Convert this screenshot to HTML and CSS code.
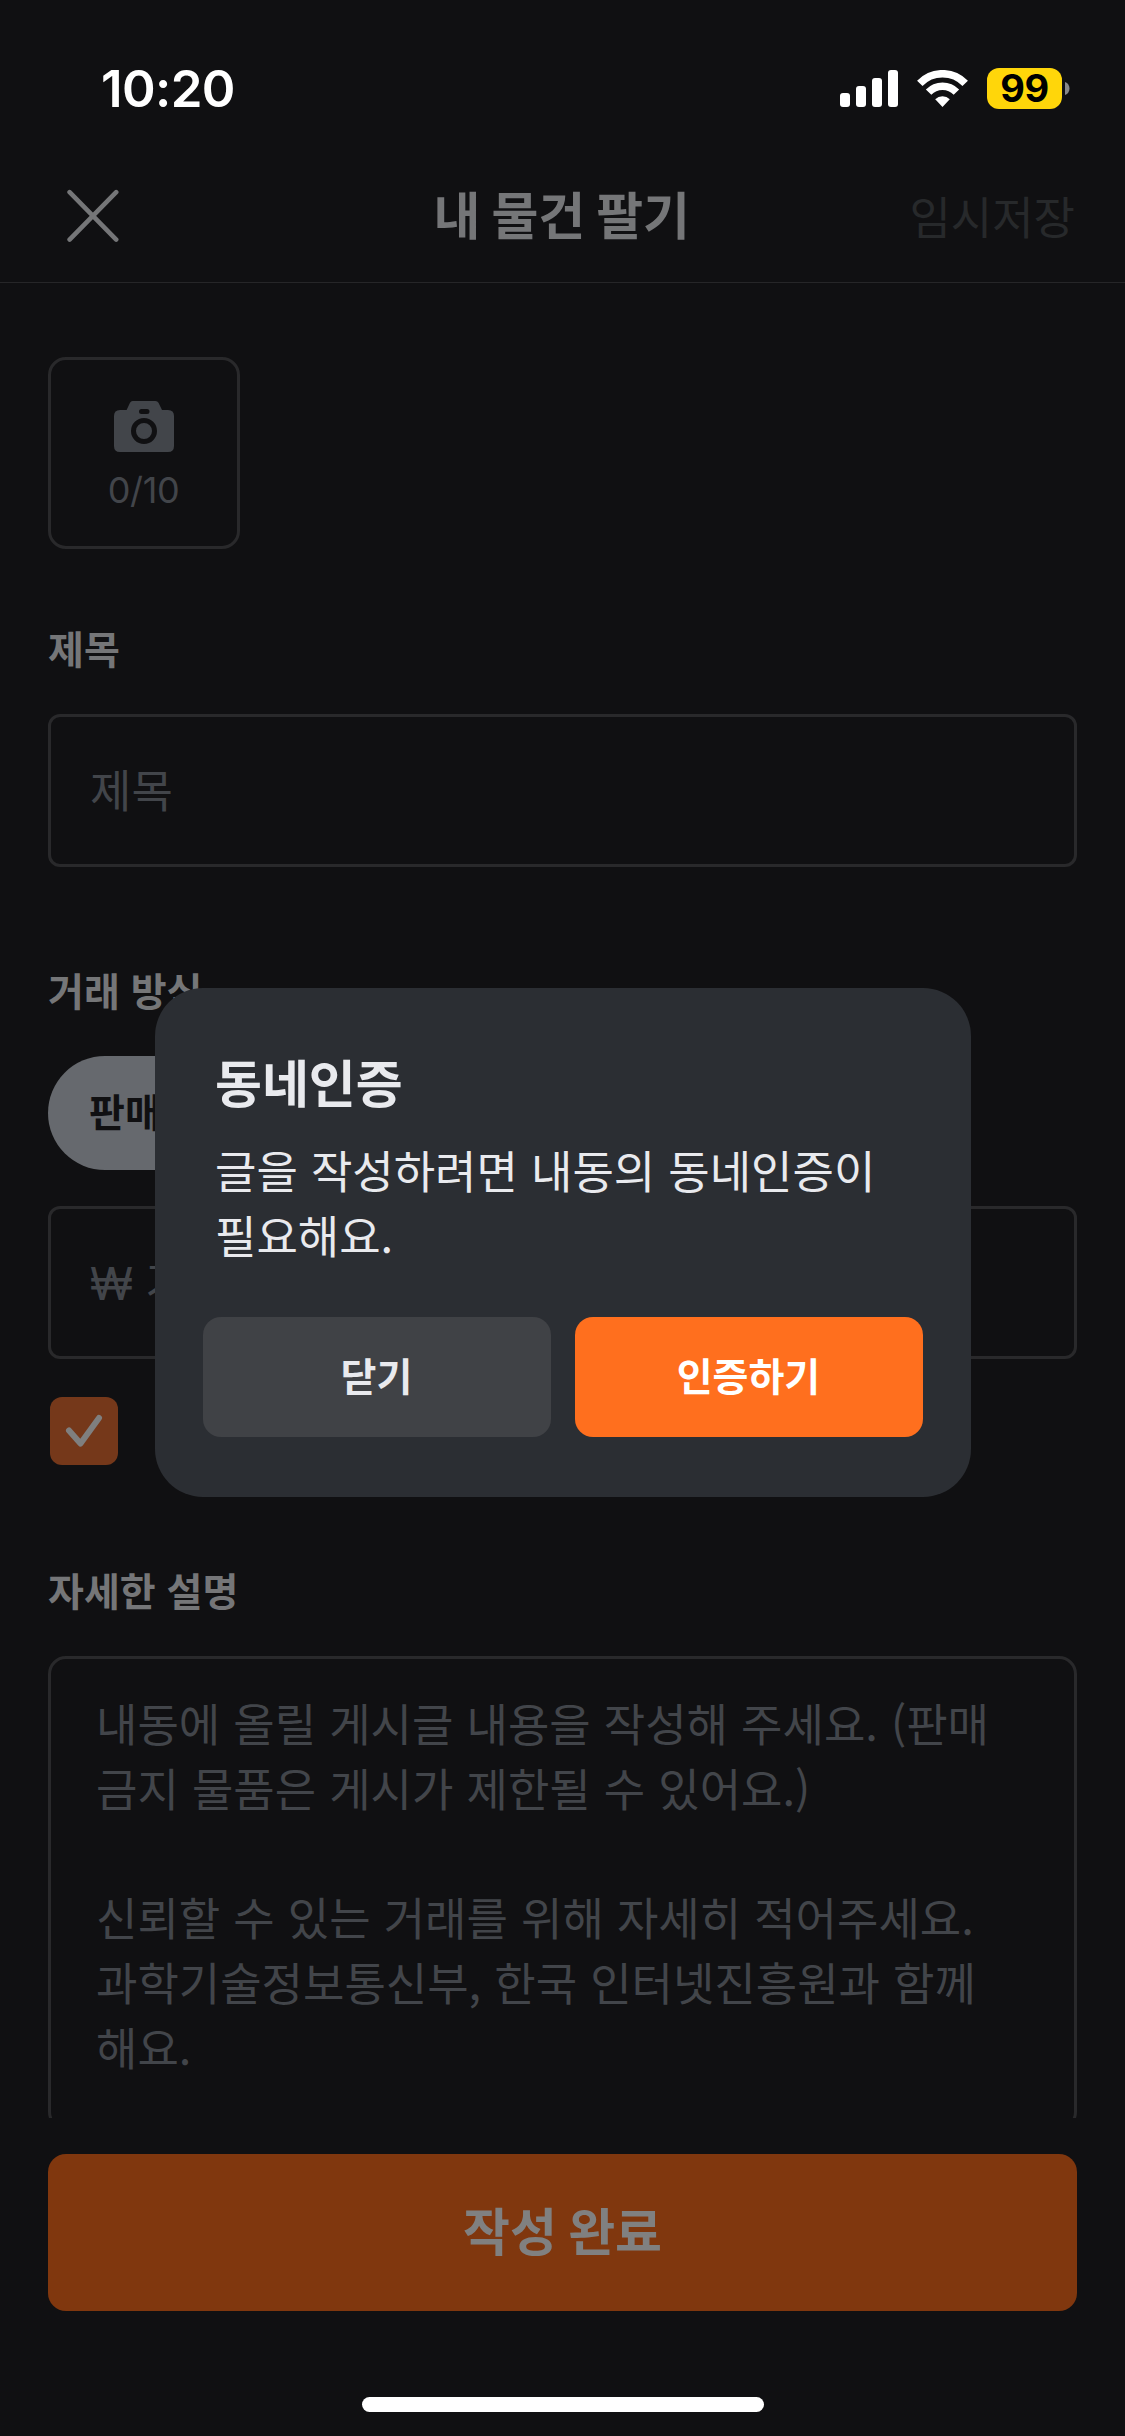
FILE: index.html
```html
<!DOCTYPE html>
<html lang="ko">
<head>
<meta charset="utf-8">
<title>내 물건 팔기</title>
<link rel="stylesheet" href="styles.css">
</head>
<body>
<div class="screen">
  <div class="status-bar">
    <span class="clock">10:20</span>
    <div class="indicators">
      <svg class="signal" width="58" height="37" viewBox="0 0 58 37" fill="#fff">
        <rect x="0" y="23" width="10" height="14" rx="3"/>
        <rect x="16" y="16" width="10" height="21" rx="3"/>
        <rect x="32" y="8" width="10" height="29" rx="3"/>
        <rect x="48" y="0" width="10" height="37" rx="3"/>
      </svg>
      <svg class="wifi" width="51" height="37" viewBox="0 0 51 37" fill="none" stroke="#fff" stroke-width="7.6">
        <path d="M2.8 13.4A31.5 31.5 0 0 1 48.2 13.4"/>
        <path d="M11.6 22.1A19.4 19.4 0 0 1 39.4 22.1"/>
        <path d="M18.2 29.2a10.5 10.5 0 0 1 14.6 0L25.500 37z" fill="#fff" stroke="none"/>
      </svg>
      <div class="battery">
        <span class="battery-level">99</span>
        <svg width="5" height="13" viewBox="0 0 5 13"><path d="M0 0C6 2 6 11 0 13z" fill="#88888a"/></svg>
      </div>
    </div>
  </div>

  <header class="nav">
    <svg class="close" width="52" height="54" viewBox="0 0 52 54" fill="none" stroke="#757678" stroke-width="4.6" stroke-linecap="round"><path d="M2.6 3.2 49.2 50.6M49.2 3.2 2.6 50.6"/></svg>
    <h1 class="nav-title">내 물건 팔기</h1>
    <span class="nav-save">임시저장</span>
  </header>

  <main class="form">
    <div class="photo">
      <svg width="60" height="51" viewBox="0 0 60 51">
        <path fill="#42454a" fill-rule="evenodd" d="M18.500 0H41.500Q43.500 0 44.500 1.800L48 9H54Q60 9 60 15V45Q60 51 54 51H6Q0 51 0 45V15Q0 9 6 9H12.600L16 1.800Q17 0 18.500 0ZM27.500 8A2.500 2.500 0 0 0 27.500 13H33A2.500 2.500 0 0 0 33 8ZM30 17A13 13 0 1 0 30 43A13 13 0 1 0 30 17ZM30 22A8 8 0 1 1 30 38A8 8 0 1 1 30 22Z"/>
      </svg>
      <span class="photo-count">0/10</span>
    </div>

    <h2 class="label">제목</h2>
    <div class="field">제목</div>

    <h2 class="label label-trade">거래 방식</h2>
    <div class="chips"><span class="chip">판매하기</span></div>
    <div class="field"><span class="won">₩</span> 가격을 입력해주세요.</div>
    <div class="checkbox">
      <svg width="68" height="68" viewBox="0 0 68 68" fill="none" stroke="#7f7f7f" stroke-width="6" stroke-linecap="round" stroke-linejoin="round"><path d="M19 33.500 30.500 46.500 49 21"/></svg>
    </div>

    <h2 class="label label-detail">자세한 설명</h2>
    <div class="textarea">내동에 올릴 게시글 내용을 작성해 주세요. (판매<br>금지 물품은 게시가 제한될 수 있어요.)<br><br>신뢰할 수 있는 거래를 위해 자세히 적어주세요.<br>과학기술정보통신부, 한국 인터넷진흥원과 함께<br>해요.</div>
  </main>

  <footer class="footer">
    <div class="submit">작성 완료</div>
    <div class="home-indicator"></div>
  </footer>

  <div class="dialog">
    <h2 class="dialog-title">동네인증</h2>
    <p class="dialog-body">글을 작성하려면 내동의 동네인증이<br>필요해요.</p>
    <div class="dialog-actions">
      <div class="btn btn-close">닫기</div>
      <div class="btn btn-verify">인증하기</div>
    </div>
  </div>
</div>
</body>
</html>
```
FILE: styles.css
```css
* { box-sizing: border-box; margin: 0; padding: 0; }

body {
  background: #101012;
  font-family: "Noto Sans CJK KR", sans-serif;
}

.screen {
  position: relative;
  width: 1125px;
  height: 2436px;
  overflow: hidden;
  display: flex;
  flex-direction: column;
}

.status-bar {
  height: 132px;
  padding: 46px 55px 0 101px;
  display: flex;
  justify-content: space-between;
  align-items: flex-start;
  flex: none;
}
.clock {
  font: 600 51px/86px Inter, sans-serif;
  letter-spacing: -0.6px;
  color: #fff;
}
.indicators {
  display: flex;
  align-items: center;
  height: 85px;
}
.wifi { margin-left: 19px; }
.battery {
  display: flex;
  align-items: center;
  gap: 3px;
  margin-left: 19px;
}
.battery-level {
  width: 75px;
  height: 41px;
  border-radius: 12px;
  background: #ffd60a;
  color: #000;
  font: 700 38px/41px Inter, sans-serif;
  letter-spacing: -0.5px;
  text-align: center;
}

.nav {
  height: 151px;
  flex: none;
  padding: 18px 67px 0;
  border-bottom: 1px solid #262628;
  display: grid;
  grid-template-columns: 1fr auto 1fr;
  align-items: center;
}
.nav-title {
  font-size: 51px;
  line-height: 74px;
  font-weight: 700;
  letter-spacing: -0.3px;
  word-spacing: -2.5px;
  color: #757678;
  margin: -6px 2px 0 0;
}
.nav-save {
  justify-self: end;
  font-size: 45px;
  line-height: 66px;
  color: #27292b;
  margin: 0 -17px 0 0;
}

.form {
  height: 1835px;
  flex: none;
  padding: 74px 48px 0;
  overflow: hidden;
}
.photo {
  width: 192px;
  height: 192px;
  border: 3px solid #29292b;
  border-radius: 18px;
  display: flex;
  flex-direction: column;
  align-items: center;
  padding-top: 41px;
}
.photo-count {
  font: 400 36px/44px Inter, sans-serif;
  letter-spacing: -0.4px;
  color: #42454a;
  margin: 16px 1px 0 0;
}
.label {
  font-size: 39px;
  line-height: 56px;
  font-weight: 700;
  color: #757678;
  margin: 70px 0 39px;
}
.label-trade { margin-top: 94px; }
.label-detail { margin-top: 96px; }
.field {
  height: 153px;
  border: 3px solid #29292b;
  border-radius: 12px;
  padding: 0 39px;
  font-size: 45px;
  line-height: 143px;
  color: #42454a;
}
.won {
  font-family: Inter, sans-serif;
  line-height: 1;
}
.chips { display: flex; margin-bottom: 36px; }
.chip {
  height: 114px;
  border-radius: 57px;
  padding: 0 41px;
  background: #66696e;
  color: #101012;
  font-size: 39px;
  font-weight: 700;
  line-height: 109px;
}
.checkbox {
  width: 68px;
  height: 68px;
  margin: 38px 0 0 2px;
  border-radius: 12px;
  background: #75381a;
}
.textarea {
  height: 474px;
  border: 3px solid #29292b;
  border-radius: 18px;
  padding: 32px 45px 0;
  font-size: 45px;
  line-height: 64.8px;
  word-spacing: 0.5px;
  white-space: nowrap;
  color: #42454a;
}

.footer {
  flex: 1;
  padding-top: 36px;
  display: flex;
  flex-direction: column;
  align-items: center;
}
.submit {
  width: 1029px;
  height: 157px;
  border-radius: 18px;
  background: #80370e;
  color: #808080;
  font-size: 51px;
  font-weight: 700;
  line-height: 151px;
  word-spacing: -3px;
  text-align: center;
}
.home-indicator {
  width: 402px;
  height: 15px;
  margin-top: 86px;
  border-radius: 8px;
  background: #fff;
}

.dialog {
  position: absolute;
  left: 155px;
  top: 988px;
  width: 816px;
  height: 509px;
  border-radius: 48px;
  background: #2b2e33;
  padding: 56px 48px 60px;
  color: #e9eaee;
}
.dialog-title {
  font-size: 51px;
  line-height: 74px;
  font-weight: 700;
  padding-left: 12px;
}
.dialog-body {
  margin-top: 19px;
  padding-left: 12px;
  font-size: 45px;
  line-height: 65px;
  word-spacing: 0.5px;
  white-space: nowrap;
}
.dialog-actions {
  display: flex;
  gap: 24px;
  margin-top: 50px;
}
.btn {
  flex: 1;
  height: 120px;
  border-radius: 18px;
  padding-right: 1px;
  font-size: 39px;
  font-weight: 700;
  line-height: 114px;
  text-align: center;
}
.btn-close { background: #404246; }
.btn-verify { background: #ff6f1e; color: #fff; }
```
